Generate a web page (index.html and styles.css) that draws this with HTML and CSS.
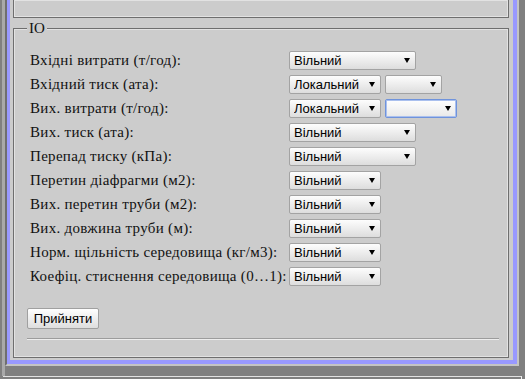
FILE: index.html
```html
<!DOCTYPE html>
<html lang="uk">
<head>
    <meta charset="UTF-8">
    <meta name="viewport" content="width=device-width, initial-scale=1.0">
    <title>IO</title>
    <link rel="stylesheet" href="styles.css">
</head>
<body>
    <div class="column">
        <div class="panel">
            <div class="frame">
                <fieldset class="prev-fieldset"></fieldset>

                <fieldset class="io-fieldset">
                    <legend>IO</legend>
                    <div class="fields">
                        <label>Вхідні витрати (т/год):</label>
                        <div class="controls">
                            <span class="select wide"><select><option>Вільний</option></select></span>
                        </div>

                        <label>Вхідний тиск (ата):</label>
                        <div class="controls">
                            <span class="select"><select><option>Локальний</option></select></span>
                            <span class="select small"><select><option></option></select></span>
                        </div>

                        <label>Вих. витрати (т/год):</label>
                        <div class="controls">
                            <span class="select"><select><option>Локальний</option></select></span>
                            <span class="select medium focused"><select><option></option></select></span>
                        </div>

                        <label>Вих. тиск (ата):</label>
                        <div class="controls">
                            <span class="select wide"><select><option>Вільний</option></select></span>
                        </div>

                        <label>Перепад тиску (кПа):</label>
                        <div class="controls">
                            <span class="select wide"><select><option>Вільний</option></select></span>
                        </div>

                        <label>Перетин діафрагми (м2):</label>
                        <div class="controls">
                            <span class="select"><select><option>Вільний</option></select></span>
                        </div>

                        <label>Вих. перетин труби (м2):</label>
                        <div class="controls">
                            <span class="select"><select><option>Вільний</option></select></span>
                        </div>

                        <label>Вих. довжина труби (м):</label>
                        <div class="controls">
                            <span class="select"><select><option>Вільний</option></select></span>
                        </div>

                        <label>Норм. щільність середовища (кг/м3):</label>
                        <div class="controls">
                            <span class="select"><select><option>Вільний</option></select></span>
                        </div>

                        <label>Коефіц. стиснення середовища (0…1):</label>
                        <div class="controls">
                            <span class="select"><select><option>Вільний</option></select></span>
                        </div>
                    </div>

                    <button class="submit-button">Прийняти</button>
                    <hr class="divider">
                </fieldset>
            </div>
        </div>
    </div>
    <div class="next-box"></div>
</body>
</html>
```

FILE: styles.css
```css
* {
    margin: 0;
    padding: 0;
    box-sizing: border-box;
}

html, body {
    height: 100%;
    overflow: hidden;
}

body {
    background: #808080;
    font-family: "Liberation Serif", "Times New Roman", serif;
    font-size: 15px;
    color: #111;
}

.column {
    margin-left: 2px;
    border-left: 3px solid #a9a9a9;
    padding-bottom: 10px;
}

.panel {
    width: 514px;
    border-style: solid;
    border-width: 0 2px 2px 2px;
    border-color: #7a7a7a #c4c4c4 #c4c4c4 #6f6f6f;
}

.frame {
    background: #cccccc;
    border-style: solid;
    border-color: #9999ff;
    border-width: 0 4px 4px 3px;
    padding: 0 4px 2px 3px;
}

fieldset {
    border: 1px solid #6e6e6e;
    box-shadow: inset 0 0 0 1px #e2e2e2;
}

.prev-fieldset {
    border-top: none;
    height: 18px;
}

.io-fieldset {
    margin-top: 2px;
    padding: 12px 9px 17px 13px;
}

.io-fieldset legend {
    padding: 0 2px;
    line-height: 16px;
    background: #cccccc;
}

.fields {
    display: grid;
    grid-template-columns: 262px auto;
    grid-auto-rows: 24px;
    align-items: center;
}

.fields label {
    padding-left: 3px;
    white-space: nowrap;
    letter-spacing: 0.3px;
}

.controls {
    display: flex;
    gap: 4px;
}

.select {
    position: relative;
    display: inline-block;
    width: 92px;
    height: 19px;
}

.select.wide {
    width: 127px;
}

.select.small {
    width: 57px;
}

.select.medium {
    width: 72px;
}

.select select {
    -webkit-appearance: none;
    appearance: none;
    width: 100%;
    height: 100%;
    border: 1px solid #a3a3a3;
    border-radius: 2px;
    background: linear-gradient(#fdfdfd, #dddddd);
    font-family: "Liberation Sans", Arial, sans-serif;
    font-size: 13px;
    color: #000;
    padding: 0 0 0 4px;
    outline: none;
}

.select.focused select {
    border-color: #6f93dc;
    box-shadow: inset 0 0 0 1px #aac0ee;
    background: linear-gradient(#ffffff, #e8e8e8);
}

.select::after {
    content: '';
    position: absolute;
    right: 6px;
    top: 7px;
    border-left: 3px solid transparent;
    border-right: 3px solid transparent;
    border-top: 5px solid #000;
    pointer-events: none;
}

.submit-button {
    display: block;
    margin-top: 20px;
    width: 72px;
    height: 21px;
    border: 1px solid #a0a0a0;
    border-radius: 2px;
    background: linear-gradient(#fefefe, #dedede);
    font-family: "Liberation Sans", Arial, sans-serif;
    font-size: 13px;
    color: #000;
}

.divider {
    margin-top: 9px;
    border: none;
    border-top: 1px solid #9c9c9c;
    border-bottom: 1px solid #ededed;
}

.next-box {
    margin-left: 3px;
    width: 519px;
    height: 20px;
    border-top: 1px solid #e2e2e2;
    border-right: 1px solid #f4f4f4;
}
```
